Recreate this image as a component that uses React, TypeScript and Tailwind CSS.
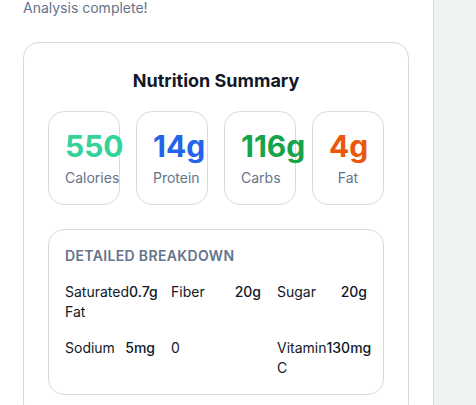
import React from "react";

type Stat = { value: string; label: string; color: string };
type Item = { label: string; value: string };

const stats: Stat[] = [
  { value: "550", label: "Calories", color: "text-[#34d399]" },
  { value: "14g", label: "Protein", color: "text-[#2563eb]" },
  { value: "116g", label: "Carbs", color: "text-[#16a34a]" },
  { value: "4g", label: "Fat", color: "text-[#ea580c]" },
];

const details: Item[] = [
  { label: "Saturated Fat", value: "0.7g" },
  { label: "Fiber", value: "20g" },
  { label: "Sugar", value: "20g" },
  { label: "Sodium", value: "5mg" },
  { label: "0", value: "" },
  { label: "Vitamin C", value: "130mg" },
];

export default function App() {
  return (
    <div
      className="flex h-[405px] w-[476px] overflow-hidden bg-[#eff4f3]"
      style={{ fontFamily: "Inter, 'Liberation Sans', sans-serif" }}
    >
      <div className="w-[434px] shrink-0 border-r border-[#d5dae3] bg-white pl-[23px] pr-6">
        <p className="-mt-[2px] text-sm text-[#64748b]">Analysis complete!</p>

        <div className="mt-6 rounded-2xl border border-[#d5dae3] p-6">
          <h2 className="mb-4 text-center text-lg font-bold text-[#111827]">
            Nutrition Summary
          </h2>

          <div className="grid grid-cols-4 gap-4">
            {stats.map((s) => (
              <div
                key={s.label}
                className="rounded-2xl border border-[#d5dae3] p-4 text-center"
              >
                <div className={`text-3xl font-bold ${s.color}`}>{s.value}</div>
                <div className="mt-1 text-sm text-[#64748b]">{s.label}</div>
              </div>
            ))}
          </div>

          <div className="mt-6 rounded-2xl border border-[#d5dae3] p-4">
            <h3 className="mb-4 text-sm font-semibold uppercase tracking-wide text-[#64748b]">
              Detailed Breakdown
            </h3>
            <div className="grid grid-cols-3 gap-4 text-sm text-[#111827]">
              {details.map((d, i) => (
                <div key={i} className="flex justify-between">
                  <span>{d.label}</span>
                  <span className="font-medium">{d.value}</span>
                </div>
              ))}
            </div>
          </div>
        </div>
      </div>
      <div className="flex-1" />
    </div>
  );
}
